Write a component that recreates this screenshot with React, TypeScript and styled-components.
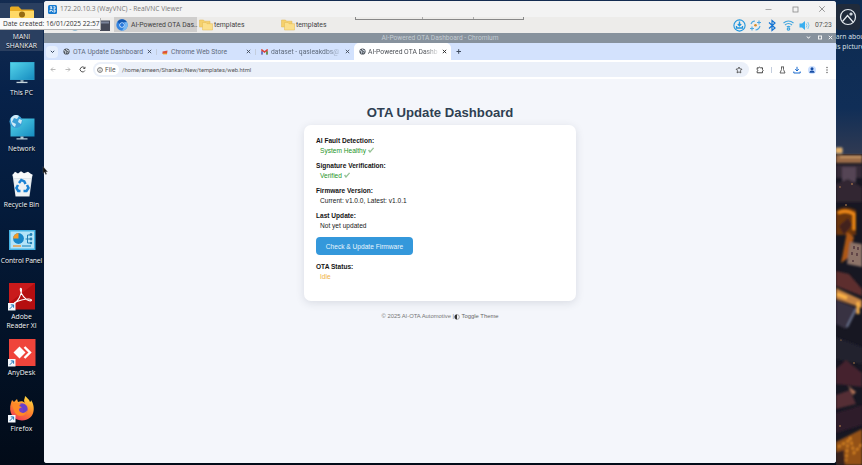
import React from 'react';
import styled, { createGlobalStyle } from 'styled-components';

const Global = createGlobalStyle`
  * { box-sizing: border-box; }
  html, body { margin: 0; padding: 0; overflow: hidden; }
  body { width: 862px; height: 465px; background: #07162e; }
  svg { display: block; flex: none; }
`;

const ui = `"Open Sans", "Noto Sans", sans-serif`;
const roboto = `Roboto, sans-serif`;

const Desktop = styled.div`
  position: relative;
  display: grid;
  grid-template-columns: 44px 792px 26px;
  width: 862px;
  height: 465px;
  overflow: hidden;
  background: linear-gradient(#142c51 0, #07224a 90px, #041b3b 210px, #031329 330px, #020b18 465px);
`;

const IconColumn = styled.div`
  display: flex;
  flex-direction: column;
  padding-top: 3px;
`;

const Shortcut = styled.div<{ $selected?: boolean }>`
  display: flex;
  flex-direction: column;
  align-items: center;
  gap: 1px;
  width: 43px;
  height: ${p => (p.$selected ? 48 : 56)}px;
  margin-bottom: ${p => (p.$selected ? 8 : 0)}px;
  background: ${p => (p.$selected ? '#2a3f60' : 'transparent')};
`;

const ShortcutLabel = styled.div<{ $tight?: boolean }>`
  font: 6.8px/9px ${ui};
  color: #f4f7fb;
  text-align: center;
  white-space: pre;
  letter-spacing: ${p => (p.$tight ? -0.12 : 0)}px;
  text-shadow: 0 1px 1px #000;
`;

const DateTip = styled.div`
  position: absolute;
  z-index: 3;
  left: 0;
  top: 18px;
  width: 101px;
  height: 12px;
  padding-left: 3px;
  background: #fafafa;
  border: solid #b4b4b4;
  border-width: 0 1px 1px 0;
  color: #333;
  font: 6.6px/12px ${ui};
  white-space: nowrap;
`;

const Window = styled.div`
  display: flex;
  flex-direction: column;
  margin-top: 1px;
  height: 462px;
  overflow: hidden;
  border-radius: 3px;
  background: #f4f6fb;
`;

const TitleBar = styled.div`
  display: flex;
  align-items: center;
  height: 16px;
  flex: none;
  padding-left: 4px;
  background: #f3f3f3;
`;

const TitleText = styled.span`
  flex: 1;
  margin-left: 3px;
  font: 6.65px/14px ${ui};
  color: #777;
`;

const WindowControls = styled.div`
  display: flex;
  align-items: center;
  gap: 19.5px;
  padding-right: 10px;
`;

const Panel = styled.div`
  display: flex;
  align-items: center;
  height: 15.5px;
  flex: none;
  background: #edecea;
`;

const PanelIcons = styled.div`
  display: flex;
  justify-content: flex-end;
  align-items: center;
  width: 70px;
  padding-right: 4px;
`;

const TaskButton = styled.div<{ $active?: boolean; $width: number }>`
  display: flex;
  align-items: center;
  gap: ${p => (p.$active ? 3 : 1)}px;
  width: ${p => p.$width}px;
  height: 15px;
  padding: 1px 0 0 2px;
  background: ${p => (p.$active ? '#cfcecd' : 'transparent')};
  font: 6.85px/14px ${roboto};
  color: #3f3f3f;
  white-space: nowrap;
`;

const Handle = styled.div`
  position: absolute;
  left: 355px;
  top: 17px;
  display: grid;
  grid-template-columns: 67px 51px 50px;
  width: 169px;
  height: 3px;
  border: solid #888;
  border-width: 0 1px 1px;
`;

const HandlePart = styled.i`
  height: 2px;
  border-right: 1px solid #aaa;
  &:last-child { border: 0; }
`;

const Tray = styled.div`
  display: flex;
  align-items: center;
  gap: 3.7px;
  margin-left: auto;
  padding: 1px 4px 0 0;
`;

const Clock = styled.span`
  width: 17px;
  font: 6.8px/14px ${roboto};
  color: #555;
`;

const ChromiumBar = styled.div`
  display: grid;
  grid-template-columns: 1fr auto 1fr;
  align-items: center;
  height: 10.5px;
  flex: none;
  background: #87929d;
  color: #c4ccd3;
  font: 6.6px/10px ${roboto};
`;

const BarButtons = styled.div`
  display: flex;
  justify-content: flex-end;
  gap: 5.5px;
  padding-right: 3px;
`;

const TabStrip = styled.div`
  display: flex;
  align-items: center;
  height: 17px;
  flex: none;
  padding-left: 2px;
  background: #d3e2fd;
`;

const TabMenu = styled.div`
  display: grid;
  place-items: center;
  width: 12px;
  height: 12px;
  border-radius: 4px;
  background: #e6effd;
`;

const Tab = styled.div<{ $width: number; $active?: boolean }>`
  display: flex;
  align-items: center;
  width: ${p => p.$width}px;
  height: ${p => (p.$active ? 17 : 15)}px;
  padding: 0 4px 0 5px;
  border-radius: 5px 5px 0 0;
  background: ${p => (p.$active ? '#fff' : 'transparent')};
`;

const TabText = styled.span<{ $fade?: boolean; $active?: boolean }>`
  flex: 1;
  margin: 0 0 0 ${p => (p.$active ? 2 : 3)}px;
  font: 6.75px/12px ${roboto};
  color: ${p => (p.$active ? '#4b4f55' : '#5f6b7c')};
  white-space: nowrap;
  mask-image: ${p => (p.$fade ? 'linear-gradient(90deg, #000 75%, rgba(0,0,0,.1) 96%)' : 'none')};
`;

const Toolbar = styled.div`
  display: flex;
  align-items: center;
  height: 19px;
  flex: none;
  padding-left: 6px;
  background: #fff;
`;

const NavIcons = styled.div`
  display: flex;
  gap: 8.5px;
  width: 43px;
`;

const Omnibox = styled.div`
  display: flex;
  align-items: center;
  width: 656px;
  height: 15px;
  padding: 0 6px 0 2px;
  border-radius: 8px;
  background: #ebf0f9;
`;

const FileChip = styled.div`
  display: flex;
  align-items: center;
  gap: 2px;
  width: 24px;
  height: 11px;
  padding-left: 2px;
  border-radius: 6px;
  background: #fff;
  font: 6.7px/12px ${roboto};
  color: #555;
`;

const Url = styled.span`
  flex: 1;
  margin-left: 3px;
  font: 5.82px/12px ${roboto};
  color: #555;
`;

const ToolIcons = styled.div`
  display: flex;
  align-items: center;
  gap: 7px;
  margin-left: 7px;
`;

const Divider = styled.i`
  width: 1px;
  height: 6px;
  background: #c3cddd;
`;

const Page = styled.main`
  display: flex;
  flex-direction: column;
  align-items: center;
  flex: 1;
  padding-top: 25px;
  background: #f4f6fb;
  font-family: "Liberation Sans", Arial, sans-serif;
`;

const Heading = styled.h1`
  margin: 0;
  height: 21px;
  font-size: 13.15px;
  line-height: 18px;
  color: #2f3f52;
`;

const Card = styled.section`
  width: 272px;
  height: 176px;
  padding: 11px 12px;
  border-radius: 7px;
  background: #fff;
  box-shadow: 0 2px 8px rgba(40, 50, 70, 0.13);
`;

const Field = styled.div`
  height: 25.1px;
  font-size: 6.58px;
  line-height: 9.6px;
`;

const Label = styled.div`
  font-weight: bold;
  color: #151515;
`;

const Value = styled.div<{ $color?: string }>`
  display: flex;
  align-items: center;
  gap: 2px;
  margin-left: 4px;
  color: ${p => p.$color || '#222'};
`;

const UpdateButton = styled.button`
  display: block;
  width: 97px;
  height: 17.5px;
  margin: 1px 0 7.5px;
  padding: 0;
  border: 0;
  border-radius: 4px;
  background: #3498db;
  color: #e8f5fd;
  font: 6.6px/17px "Liberation Sans", Arial, sans-serif;
`;

const Footer = styled.footer`
  display: flex;
  align-items: center;
  margin-top: 11px;
  font-size: 5.85px;
  line-height: 9px;
  color: #777;
`;

const ThemeToggle = styled.span`
  display: flex;
  align-items: center;
  gap: 2px;
  margin-left: -0.5px;
  color: #666;
`;

const PictureInfo = styled.div`
  position: absolute;
  left: 836px;
  top: 4px;
  width: 26px;
  height: 48px;
  overflow: hidden;
`;

const InfoTile = styled.div`
  display: grid;
  place-items: center;
  width: 24px;
  height: 26px;
  background: #202b3b;
  border-radius: 3px;
`;

const InfoText = styled.div`
  margin: 2px 0 0 -4px;
  width: 50px;
  font: 6.8px/9.5px ${ui};
  color: #dfe5ec;
  white-space: pre;
`;

const InfoLine = styled.div<{ $shift: number }>`
  margin-left: ${p => p.$shift}px;
`;

const Pointer = styled.svg`
  position: absolute;
  z-index: 4;
  left: 42px;
  top: 166px;
`;

const Arrow = () => (
  <g>
    <rect x="0" y="20" width="7.5" height="7.5" fill="#f3f7fb" />
    <path d="M1.8 25.8 5.5 22M2.8 21.9h2.8v2.8" stroke="#1f75b8" strokeWidth="1" fill="none" />
  </g>
);

const art: Record<string, React.ReactNode> = {
  folder: (
    <>
      <path d="M2 5q0-1.500 1.500-1.500h7l3 3h11q1.500 0 1.500 1.500v14H2z" fill="#e8ab22" />
      <path d="M2 8h24v16H2z" fill="#ffd966" />
      <circle cx="14" cy="11.500" r="3" fill="#966b13" />
    </>
  ),
  pc: (
    <>
      <path d="M2 3h24.500v18H2z" fill="#2b9dc6" />
      <path d="M2.500 3.500h23.500v17h-23.500z" fill="url(#screen)" />
      <path d="M12.500 21h3v2h-3z" fill="#8ba0ad" />
      <path d="M8.500 22.800h11v1.300h-11z" fill="#c5d4dc" />
    </>
  ),
  network: (
    <>
      <path d="M2.500 3.500h24v18h-24z" fill="url(#screen)" />
      <path d="M12.500 21.500h3v2h-3zM8.500 23.200h11v1.300h-11z" fill="#b5c9d3" />
      <circle cx="8" cy="6.500" r="6.500" fill="#3b9fd6" />
      <path d="M3 3Q7-2 11 1L9 4 6 3 4 7 8 9 7 12Q2 9 3 3M11 4l3 1-1 4-3-2z" fill="#cfeaf7" />
    </>
  ),
  bin: (
    <>
      <path d="M4.500 3.500h20l-3 22h-14z" fill="#dde4e9" />
      <path d="M4.500 4 7 .800 10 2.500 13 .300 16 2.300 20 .800 24.500 4 23 7H6z" fill="#f7f9fa" />
      <path d="M6 8h17l-2.500 17H8z" fill="#eef2f4" />
      <path d="m11 12 2.300-3 3 1.500 1.200 2.500M19 14l1.500 3-2 3h-3M12.500 20h-2.300l-1.800-3 1.600-3" fill="none" stroke="#1c83d4" strokeWidth="2.500" />
    </>
  ),
  control: (
    <>
      <rect x="1" y="3" width="26.500" height="20" fill="#46b4e5" />
      <rect x="2.500" y="4.500" width="23.500" height="17" fill="#b4e4f8" />
      <circle cx="10.500" cy="11.500" r="5.400" fill="#1787c9" />
      <path d="M10.500 11.500V6.100a5.400 5.400 0 0 0-5.400 5.400z" fill="#f59b28" />
      <path d="M17.500 12h2V8h4M19.500 12h4M19.500 12v4h4" stroke="#2380b5" fill="none" />
      <circle cx="23" cy="7.500" r="1.400" fill="#2380b5" />
      <circle cx="23" cy="12" r="1.400" fill="#2380b5" />
      <circle cx="23" cy="16" r="1.200" fill="#2380b5" />
      <path d="M5 19h8" stroke="#ee922e" strokeWidth="1.300" />
      <path d="M14 19h9" stroke="#3895c4" strokeWidth="1.300" />
    </>
  ),
  adobe: (
    <>
      <rect x="1" y="0" width="26" height="26.500" fill="#b50e10" />
      <path d="M1 0h26L1 20z" fill="#c91a1b" />
      <path d="M6 20c4-1 8-9 7.500-13.500C13.300 4.800 12 5 12.300 7c.600 4 5 10 9 10.800 3 .500 3-1.700-.300-1.800-4-.200-11 1.500-14 3.600-1.500 1-1.800 2-.200.400z" stroke="#fff" strokeWidth="1.100" fill="none" />
      <Arrow />
    </>
  ),
  anydesk: (
    <>
      <rect x="1" y="-.500" width="26.500" height="27.500" fill="#ef443b" />
      <path d="m11.500 7.500 6 6-6 6-6-6z" fill="#fff" />
      <path d="m16.500 8 5.500 5.500-5.500 5.500" fill="none" stroke="#fff" strokeWidth="2.400" />
      <Arrow />
    </>
  ),
  firefox: (
    <>
      <path d="M17 1c2 2 4 3 5 6 1-.500 1-1 1-2 5 7 4 20-9 20.500C5 25.500 0 17 3 8l1-3 2 2 3-3 1 3c3-1 5-1 7 1-2-3 0-4 0-7z" fill="url(#fire)" />
      <circle cx="14" cy="14" r="5.700" fill="#7640c9" />
      <path d="M4 10c3-3 7-2 9 0l3 1c-2 2-5 1-5 4 1 4 6 3 8 0 0 6-8 8-12 3z" fill="#ff8a26" />
      <path d="M11 11c3-3 8-1 8 3 0 3-3 4-5 4 3-3 1-6-3-7z" fill="#6541cc" />
      <Arrow />
    </>
  ),
};

const DeskArt = ({ name }: { name: string }) => (
  <svg width="28" height="28" viewBox="0 0 28 28">
    <defs>
      <linearGradient id="screen" x2="1" y2="1">
        <stop stopColor="#55d4ea" />
        <stop offset="1" stopColor="#168cc0" />
      </linearGradient>
      <linearGradient id="fire" x1=".8" x2=".3" y2="1">
        <stop stopColor="#ffdf43" />
        <stop offset=".5" stopColor="#ff8b2b" />
        <stop offset="1" stopColor="#f03958" />
      </linearGradient>
    </defs>
    {art[name]}
  </svg>
);

const shortcuts = [
  ['folder', 'MANI\nSHANKAR'],
  ['pc', 'This PC'],
  ['network', 'Network'],
  ['bin', 'Recycle Bin'],
  ['control', 'Control Panel'],
  ['adobe', 'Adobe\nReader XI'],
  ['anydesk', 'AnyDesk'],
  ['firefox', 'Firefox'],
];

const Folders = () => (
  <svg width="14" height="12" viewBox="0 0 14 12">
    <path d="M.500 1h4l1 1.200H11V8H.500z" fill="#f5d06c" stroke="#e0b64c" strokeWidth=".5" />
    <path d="M3.500 3.500h3.500l1 1.200h5.500V11h-10z" fill="#fbdf8b" stroke="#e3bb55" strokeWidth=".5" />
  </svg>
);

const Globe = () => (
  <svg width="7" height="7" viewBox="0 0 7 7">
    <circle cx="3.500" cy="3.500" r="3.100" fill="#4e555d" />
    <path d="M1 2.500 3 3.500 2.500 5.500M3.500 1l.500 1.500 2 .500M4.200 5l1.200-1" stroke="#e5edf8" strokeWidth=".9" fill="none" />
  </svg>
);

const Close = ({ color = '#414a57', size = 5 }: { color?: string; size?: number }) => (
  <svg width={size} height={size} viewBox="0 0 5 5">
    <path d="m.8.8 3.400 3.400m0-3.400L.8 4.200" stroke={color} strokeWidth={size > 5 ? 0.55 : 0.9} />
  </svg>
);

const Check = () => (
  <svg width="6" height="6" viewBox="0 0 6 6">
    <path d="M.600 3 2 4.900 5.500.900" stroke="#7fb57f" strokeWidth="1.300" fill="none" />
    <path d="M1 3.300 2 4.500 5 1.100" stroke="#fff" strokeWidth=".4" fill="none" />
  </svg>
);

const TrayIcons = () => (
  <>
    <svg width="13" height="13" viewBox="0 0 13 13" fill="none" stroke="#2196de">
      <circle cx="6.500" cy="6.500" r="5.600" strokeWidth="1.100" />
      <path d="M6.500 2.500v4M4.800 5l1.700 1.800L8.200 5M3.500 7v2h6V7" strokeWidth="1.300" />
    </svg>
    <svg width="13" height="13" viewBox="0 0 13 13" fill="none">
      <path d="M2 5q1-3 4-3M11 7q-1 3.500-4.500 4M8 3.500h4M10 1.500v4M1 9.500h4M3 7.500v4" stroke="#4da8e2" strokeWidth="1.100" />
      <circle cx="6.500" cy="6.300" r="1.300" fill="#d88b28" />
    </svg>
    <svg width="12" height="13" viewBox="0 0 12 13" fill="none">
      <path d="m3 3.500 6 5.500-3 2.500v-10L9 4 3 9.500" stroke="#1474d3" strokeWidth="1.200" />
    </svg>
    <svg width="13" height="13" viewBox="0 0 13 13" fill="none" stroke="#40a5df" strokeWidth="1.200">
      <path d="M1.500 4q5-4 10 0M3 6q3.500-3 7 0M4.800 8q1.700-1.400 3.400 0" />
      <circle cx="6.500" cy="10" r="1.200" />
    </svg>
    <svg width="13" height="13" viewBox="0 0 13 13">
      <path d="M1.500 4.500H4l3-2.500v9L4 8.500H1.500z" fill="#38aef0" />
      <path d="M8.200 4.500q1.500 2 0 4M9.800 3q2.500 3.500 0 7" fill="none" stroke="#83c9ee" />
    </svg>
  </>
);

const Scenery = () => (
  <svg width="26" height="465" viewBox="0 0 26 465">
    <defs>
      <linearGradient id="sky" x2="0" y2="1">
        <stop stopColor="#0d2b51" />
        <stop offset=".7" stopColor="#102e57" />
        <stop offset="1" stopColor="#303a52" />
      </linearGradient>
      <filter id="glow" x="-20%" y="-5%" width="140%" height="110%">
        <feGaussianBlur stdDeviation=".9" />
      </filter>
    </defs>
    <path fill="#171722" d="M0 0h26v465H0z" />
    <path fill="url(#sky)" d="M0 0h26v154H0z" />
    <g filter="url(#glow)">
      <path d="M0 155h26v8H0z" fill="#9a6b46" />
      <path d="M0 148h6v5H0zM4 157h22" fill="#e4ae64" stroke="#e7bd82" />
      <path d="M0 165h26v13H0z" fill="#342b38" />
      <path d="M6 167h14v15H6z" fill="#544554" />
      <path d="m0 184 12-5 14 8v15H0z" fill="#302532" />
      <path d="M0 211q7-7 20-1v25H0z" fill="#6a360f" />
      <path d="M2 213q8-4 16 1v16" fill="none" stroke="#f38b14" strokeWidth="3" />
      <path d="m3 226 9-8 4 7-8 10z" fill="#42231d" />
      <path d="m11 232 7 5-6 21-7 5z" fill="#ad5815" />
      <path d="m14 242 12 2v23l-15-3z" fill="#8d7368" />
      <path d="m0 271 13 3 13 15v7L0 286z" fill="#5d2e2d" />
      <path d="m0 288 26 12v8L0 299z" fill="#c28143" />
      <path d="m1 294 10 4M22 302v12" stroke="#ffb646" strokeWidth="3" />
      <path d="m0 300 20 8-10 21-10-5z" fill="#373243" />
      <path d="m20 309-9 18" stroke="#69728d" strokeWidth="2" />
      <path d="m0 337 26 10v17L0 359z" fill="#23242f" />
      <path d="m0 369 10-9 16 13v14L0 384z" fill="#44232e" />
      <path d="m0 395 14-5 6 14-20 5z" fill="#552d35" />
      <path d="m12 386 8 6-3 3z" fill="#b9775a" />
      <path d="m0 413 26-8v20L0 433z" fill="#2f1a29" />
      <path d="m0 442 26-13v36H0z" fill="#935118" />
      <path d="m2 447 10-6-2 20M14 437l4 16 8-9" stroke="#e08b28" strokeWidth="2" fill="none" strokeDasharray="3 2" />
      <path d="m0 452 8-2 1 15H0z" fill="#38201e" />
    </g>
    <g fill="#d99655">
      <circle cx="4" cy="187" r=".7" /><circle cx="16" cy="184" r=".8" /><circle cx="10" cy="205" r=".8" />
      <circle cx="5" cy="340" r=".6" /><circle cx="18" cy="363" r=".7" /><circle cx="4" cy="426" r=".8" />
    </g>
    <path d="M18 246v3M22 247v3M16 252v3M21 253v3M17 260v2" stroke="#4c3038" strokeWidth="1.3" />
  </svg>
);

export default function App() {
  return (
    <>
      <Global />
      <Desktop>
        <IconColumn>
          {shortcuts.map(([name, text], i) => (
            <Shortcut key={name} $selected={i === 0}>
              <DeskArt name={name} />
              <ShortcutLabel $tight={name === 'control'}>{text}</ShortcutLabel>
            </Shortcut>
          ))}
        </IconColumn>

        <Window>
          <TitleBar>
            <svg width="9" height="9" viewBox="0 0 9 9">
              <rect width="9" height="9" rx="1.500" fill="#187bd0" />
              <path d="M2 1.800h1.800L2.500 3.400h1.800M2 7V5.300h1.800L5 7M5.300 1.800H7v2H5.500M5.500 5H7v2H5.500" fill="none" stroke="#fff" strokeWidth=".9" />
            </svg>
            <TitleText>172.20.10.3 (WayVNC) - RealVNC Viewer</TitleText>
            <WindowControls>
              <svg width="7" height="7"><path d="M.500 3.500h6" stroke="#aaa" /></svg>
              <svg width="7" height="7"><rect x="1" y="1" width="5" height="5" fill="none" stroke="#888" strokeWidth=".8" /></svg>
              <Close color="#888" size={8} />
            </WindowControls>
          </TitleBar>

          <Panel>
            <PanelIcons>
              <svg width="54" height="14" viewBox="0 0 54 14">
                <circle cx="5" cy="7" r="5" fill="#8e2338" />
                <circle cx="19" cy="7" r="5.500" fill="#3387b8" />
                <path d="M30 2h10v10H30z" fill="#e6c36c" />
                <path d="M44 2.500h10v10.500H44z" fill="#454957" />
                <path d="M45 3.500h8v2h-8z" fill="#7b8499" />
              </svg>
            </PanelIcons>
            <TaskButton $active $width={83}>
              <svg width="12" height="12" viewBox="0 0 12 12">
                <circle cx="6" cy="6" r="5.700" fill="#3484df" />
                <path d="M6 .300a5.700 5.700 0 0 1 5 3H6a2.700 2.700 0 0 0-2.500 1.700L1.500 2.500A5.700 5.700 0 0 1 6 .300" fill="#1459b3" />
                <path d="M11 3.300a5.700 5.700 0 0 1-5 8.400l2.500-4.300A3 3 0 0 0 8 3.300z" fill="#77b9f4" />
                <circle cx="6" cy="6" r="2.600" fill="#eef7ff" /><circle cx="6" cy="6" r="2" fill="#2878dc" />
              </svg>
              AI-Powered OTA Das..
            </TaskButton>
            <TaskButton $width={82}><Folders />templates</TaskButton>
            <TaskButton $width={80}><Folders />templates</TaskButton>
            <Tray><TrayIcons /><Clock>07:23</Clock></Tray>
          </Panel>

          <ChromiumBar>
            <span />
            <span>AI-Powered OTA Dashboard - Chromium</span>
            <BarButtons>
              <svg width="5" height="5"><path d="m1 1.500 1.500 1.800L4 1.500" fill="none" stroke="#fff" /></svg>
              <svg width="6" height="5"><rect x="1.500" y="1" width="3" height="3" fill="none" stroke="#f2f2f2" /></svg>
              <Close color="#fff" />
            </BarButtons>
          </ChromiumBar>

          <TabStrip>
            <TabMenu><svg width="5" height="4"><path d="m.8.800 1.700 1.700L4.200.800" fill="none" stroke="#33445c" strokeWidth="1" /></svg></TabMenu>
            <Tab $width={98}><Globe /><TabText>OTA Update Dashboard</TabText><Close /></Tab>
            <Divider />
            <Tab $width={98}>
              <svg width="6" height="6"><path d="m.500 2.500 5-1-.500 3.500H.500z" fill="#dc5039" /><path d="M1 5h4" stroke="#f4bd32" /></svg>
              <TabText>Chrome Web Store</TabText><Close />
            </Tab>
            <Divider />
            <Tab $width={98}>
              <svg width="7" height="6"><path d="M1 5.500V1l2.500 2L6 1v4.500" fill="none" stroke="#dc4034" strokeWidth="1.400" /><path d="M1 2.500v3" stroke="#4285f4" strokeWidth="1.400" /><path d="M6 2.500v3" stroke="#34a853" strokeWidth="1.400" /></svg>
              <TabText $fade>dataset - qasleakdbs@</TabText><Close />
            </Tab>
            <Tab $width={97} $active><Globe /><TabText $fade $active>AI-Powered OTA Dashb</TabText><Close color="#222" /></Tab>
            <svg width="13" height="7"><path d="M5.500 3.500h4.500M7.700 1.200v4.600" stroke="#3d4a5f" /></svg>
          </TabStrip>

          <Toolbar>
            <NavIcons>
              <svg width="6" height="7"><path d="M5.500 3.500H1M3 1.500l-2 2 2 2" fill="none" stroke="#aaa" strokeWidth=".8" /></svg>
              <svg width="6" height="7"><path d="M.500 3.500H5m-2-2 2 2-2 2" fill="none" stroke="#aaa" strokeWidth=".8" /></svg>
              <svg width="7" height="7"><path d="M5.700 2A2.500 2.500 0 1 0 5.900 4.500M6 .800V2.500H4.300" fill="none" stroke="#444" strokeWidth=".9" /></svg>
            </NavIcons>
            <Omnibox>
              <FileChip>
                <svg width="6" height="6"><circle cx="3" cy="3" r="2.400" fill="none" stroke="#555" strokeWidth=".8" /><path d="M3 2.800v1.600M3 1.500v.700" stroke="#555" strokeWidth=".8" /></svg>
                File
              </FileChip>
              <Url>/home/ameen/Shankar/New/templates/web.html</Url>
              <svg width="8" height="8"><path d="m4 1 .9 1.900 2.100.300-1.500 1.500.3 2.200L4 5.900l-1.900 1 .4-2.200L1 3.200l2.100-.3z" fill="none" stroke="#444" strokeWidth=".8" /></svg>
            </Omnibox>
            <ToolIcons>
              <svg width="8" height="8"><path d="M1.200 1.800h1.700Q3.700.400 4.500 1.800h2v1.700q1.400.800 0 1.600v1.700H1.200V5.200Q2.500 4.300 1.200 3.400z" fill="none" stroke="#444" /></svg>
              <Divider />
              <svg width="7" height="8"><path d="M2 .900h3M2.500 1v2.500L1 7h5L4.500 3.500V1" fill="none" stroke="#555" strokeWidth=".9" /></svg>
              <svg width="8" height="8"><path d="M4 .800v4M2.200 3.200 4 5l1.800-1.800M.800 5.500V7h6.400V5.500" fill="none" stroke="#1769ce" strokeWidth="1" /></svg>
              <svg width="8" height="8"><circle cx="4" cy="4" r="4" fill="#cce0ff" /><circle cx="4" cy="2.700" r="1.500" fill="#174ea6" /><path d="M1.300 6.700Q1.500 4.500 4 4.500t2.700 2.200z" fill="#174ea6" /></svg>
              <svg width="8" height="8" fill="#555"><circle cx="4" cy="1.500" r=".7" /><circle cx="4" cy="4" r=".7" /><circle cx="4" cy="6.500" r=".7" /></svg>
            </ToolIcons>
          </Toolbar>

          <Page>
            <Heading>OTA Update Dashboard</Heading>
            <Card>
              <Field><Label>AI Fault Detection:</Label><Value $color="#259528">System Healthy <Check /></Value></Field>
              <Field><Label>Signature Verification:</Label><Value $color="#259528">Verified <Check /></Value></Field>
              <Field><Label>Firmware Version:</Label><Value>Current: v1.0.0, Latest: v1.0.1</Value></Field>
              <Field><Label>Last Update:</Label><Value>Not yet updated</Value></Field>
              <UpdateButton>Check &amp; Update Firmware</UpdateButton>
              <Field><Label>OTA Status:</Label><Value $color="#efb23f">Idle</Value></Field>
            </Card>
            <Footer>
              © 2025 AI-OTA Automotive |
              <ThemeToggle>
                <svg width="6" height="6"><circle cx="3" cy="3" r="2.400" fill="none" stroke="#777" strokeWidth=".6" /><path d="M3 .600a2.400 2.400 0 0 0 0 4.800z" fill="#333" /></svg>
                Toggle Theme
              </ThemeToggle>
            </Footer>
          </Page>
        </Window>

        <Scenery />
        <Handle><HandlePart /><HandlePart /><HandlePart /></Handle>
        <DateTip>Date created: 16/01/2025 22:57</DateTip>
        <PictureInfo>
          <InfoTile>
            <svg width="18" height="18" viewBox="0 0 18 18" fill="none" stroke="#e7ecf0" strokeWidth="1.200">
              <circle cx="9" cy="9" r="7.500" /><path d="m3.500 13.500 5-6 5.500 6.500" /><circle cx="12" cy="6" r="1" />
            </svg>
          </InfoTile>
          <InfoText>
            <InfoLine $shift={0}>earn about</InfoLine>
            <InfoLine $shift={-3}>this picture</InfoLine>
          </InfoText>
        </PictureInfo>
        <Pointer width="6" height="9"><path d="M1 .500v7l1.500-1.400 1.200 2.400 1-.500-1.100-2.300h2z" fill="#111" stroke="#777" strokeWidth=".3" /></Pointer>
      </Desktop>
    </>
  );
}
